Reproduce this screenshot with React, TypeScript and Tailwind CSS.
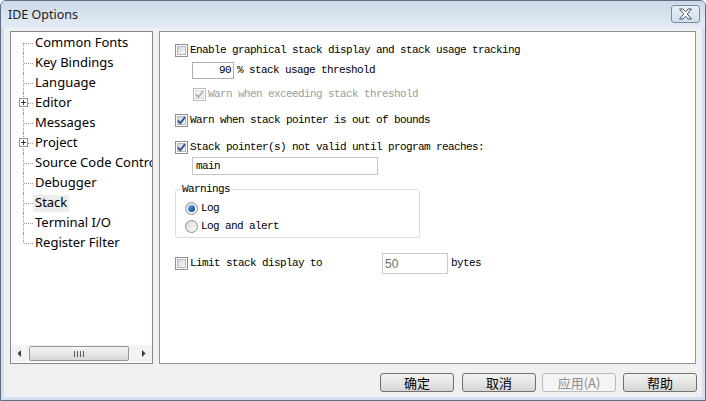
import React from 'react';

const treeItems = [
  { label: 'Common Fonts' },
  { label: 'Key Bindings' },
  { label: 'Language' },
  { label: 'Editor', plus: true },
  { label: 'Messages' },
  { label: 'Project', plus: true },
  { label: 'Source Code Control' },
  { label: 'Debugger' },
  { label: 'Stack', selected: true },
  { label: 'Terminal I/O' },
  { label: 'Register Filter' },
];

function CheckBox({ checked, disabled }: { checked?: boolean; disabled?: boolean }) {
  return (
    <span
      className={`w-[13px] h-[13px] shrink-0 border p-[1px] bg-white flex ${
        disabled ? 'border-[#bcbcbc]' : 'border-[#8e8f8f]'
      }`}
    >
      <span
        className={`relative flex-1 border flex items-center justify-center ${
          disabled
            ? 'border-[#dcdcdc] bg-[#f4f4f4]'
            : 'border-[#b4b9be] bg-gradient-to-br from-[#d4d7da] to-[#f7f7f7]'
        }`}
      >
        {checked && (
          <svg width="11" height="11" viewBox="0 0 11 11" className="absolute -top-[2px] -left-[2px]">
            <path
              d="M2 5.5 L4.4 8.2 L9 2.2"
              stroke={disabled ? '#b5b5b5' : '#35579a'}
              strokeWidth="1.9"
              fill="none"
            />
          </svg>
        )}
      </span>
    </span>
  );
}

function Radio({ checked }: { checked?: boolean }) {
  return (
    <span className="w-[13px] h-[13px] shrink-0 rounded-full border border-[#8e8f8f] bg-gradient-to-br from-[#dadada] to-[#fbfbfb] flex items-center justify-center">
      {checked && (
        <span className="w-[7px] h-[7px] rounded-full bg-gradient-to-br from-[#8fc3ec] via-[#2a72c0] to-[#123f7a]" />
      )}
    </span>
  );
}

function DlgButton({ label, disabled }: { label: string; disabled?: boolean }) {
  return (
    <button
      className={`w-[74px] h-[19px] rounded-[3px] border flex items-center justify-center text-[13px] leading-none ${
        disabled
          ? 'border-[#b8bcbf] bg-[#f4f4f4] text-[#8d8d8d]'
          : 'border-[#707070] bg-gradient-to-b from-[#f2f2f2] via-[#e6e6e6] to-[#d4d4d4] text-black'
      }`}
    >
      {label}
    </button>
  );
}

export default function App() {
  return (
    <div className="w-[706px] h-[401px] flex flex-col bg-[#d3dfee] border border-[#5d6d82] rounded-t-[6px] overflow-hidden font-['Noto_Sans',sans-serif]">
      {/* Title bar */}
      <div className="h-[27px] shrink-0 flex items-start justify-between pl-[7px] pr-[5px] pt-[4px] bg-gradient-to-b from-[#cddaea] to-[#e3ebf5]">
        <span className="text-[12.5px] leading-[18px] text-[#1b1b1b] pt-[1px]">IDE Options</span>
        <div className="w-[29px] h-[18px] rounded-[3px] border border-[#7d8ba0] bg-gradient-to-b from-[#e9eff7] to-[#d3deec] flex items-center justify-center">
          <svg width="15" height="12" viewBox="0 0 15 12">
            <path
              d="M1.5 1 L5 1 L7.5 3.8 L10 1 L13.5 1 L9.3 6 L13.5 11 L10 11 L7.5 8.2 L5 11 L1.5 11 L5.7 6 Z"
              fill="#f6f8fb"
              stroke="#4b5566"
              strokeWidth="1"
            />
          </svg>
        </div>
      </div>

      {/* Client area */}
      <div className="flex-1 mx-[3px] mb-[3px] bg-[#f0f0f0] flex flex-col pt-[3px]">
        <div className="flex pl-[6px]">
          {/* Tree */}
          <div className="w-[143px] h-[333px] border border-[#828790] bg-white flex flex-col overflow-hidden">
            <div className="flex-1 pt-[1px]">
              {treeItems.map((it, i) => (
                <div key={it.label} className="h-[20px] flex items-center">
                  <div className="relative w-[22px] h-full shrink-0">
                    <span
                      className={`absolute left-[12px] w-0 border-l border-dotted border-[#9a9a9a] ${
                        i === 0 ? 'top-1/2 bottom-0' : i === treeItems.length - 1 ? 'top-0 h-1/2' : 'top-0 bottom-0'
                      }`}
                    />
                    <span className="absolute left-[13px] top-1/2 w-[9px] h-0 border-t border-dotted border-[#9a9a9a]" />
                    {it.plus && (
                      <span className="absolute left-[8px] top-[5px] w-[9px] h-[9px] border border-[#929292] bg-white flex items-center justify-center">
                        <svg width="7" height="7" viewBox="0 0 7 7">
                          <path d="M1 3.5 H6 M3.5 1 V6" stroke="#2f3a4a" strokeWidth="1" />
                        </svg>
                      </span>
                    )}
                  </div>
                  <span
                    className={`px-[2px] h-[17px] flex items-center text-[13px] text-black whitespace-nowrap ${
                      it.selected ? 'bg-[#ececec]' : ''
                    }`}
                  >
                    {it.label}
                  </span>
                </div>
              ))}
            </div>
            {/* Horizontal scrollbar */}
            <div className="h-[17px] mb-[1px] flex bg-[#f3f3f3]">
              <div className="w-[17px] flex items-center justify-center">
                <svg width="5" height="7" viewBox="0 0 5 7">
                  <path d="M4 0 L0.5 3.5 L4 7 Z" fill="#3a3a3a" />
                </svg>
              </div>
              <div className="flex-1 flex items-center">
                <div className="ml-[1px] w-[100px] h-[15px] rounded-[2px] border border-[#979797] bg-gradient-to-b from-[#f4f4f4] via-[#e7e7e7] to-[#d6d6d6] flex items-center justify-center gap-[2px]">
                  <span className="w-px h-[6px] bg-[#5a5a5a]" />
                  <span className="w-px h-[6px] bg-[#5a5a5a]" />
                  <span className="w-px h-[6px] bg-[#5a5a5a]" />
                  <span className="w-px h-[6px] bg-[#5a5a5a]" />
                </div>
              </div>
              <div className="w-[17px] flex items-center justify-center">
                <svg width="5" height="7" viewBox="0 0 5 7">
                  <path d="M1 0 L4.5 3.5 L1 7 Z" fill="#3a3a3a" />
                </svg>
              </div>
            </div>
          </div>

          {/* Options page */}
          <div className="ml-[6px] w-[537px] h-[333px] border border-[#8e949c] bg-white pl-[15px] pt-[10px] flex flex-col font-['Liberation_Mono',monospace] text-[11px] tracking-[-0.6px] text-black">
            <div className="h-[16px] flex items-center gap-[2px]">
              <CheckBox />
              <span>Enable graphical stack display and stack usage tracking</span>
            </div>
            <div className="mt-[4px] h-[17px] flex items-center pl-[17px]">
              <div className="w-[42px] h-[17px] border border-[#abadb3] flex items-center justify-end pr-[2px]">90</div>
              <span className="ml-[3px]">% stack usage threshold</span>
            </div>
            <div className="mt-[7px] h-[16px] flex items-center gap-[2px] pl-[18px]">
              <CheckBox checked disabled />
              <span className="text-[#9c9c9c]">Warn when exceeding stack threshold</span>
            </div>
            <div className="mt-[10px] h-[16px] flex items-center gap-[2px]">
              <CheckBox checked />
              <span>Warn when stack pointer is out of bounds</span>
            </div>
            <div className="mt-[11px] h-[16px] flex items-center gap-[2px]">
              <CheckBox checked />
              <span>Stack pointer(s) not valid until program reaches:</span>
            </div>
            <div className="mt-[2px] pl-[17px]">
              <div className="w-[186px] h-[18px] border border-[#c5c7cc] flex items-center pl-[3px]">main</div>
            </div>

            <fieldset className="mt-[7px] w-[245px] border border-[#d5dfe5] rounded-[3px] pl-[9px] pr-0 pt-0 pb-[3px] m-0">
              <legend className="-ml-[4px] px-[1px] h-[14px] leading-[14px]">Warnings</legend>
              <div className="mt-[4px] h-[16px] flex items-center gap-[3px]">
                <Radio checked />
                <span>Log</span>
              </div>
              <div className="mt-[2px] h-[16px] flex items-center gap-[3px]">
                <Radio />
                <span>Log and alert</span>
              </div>
            </fieldset>

            <div className="mt-[15px] h-[21px] flex items-center">
              <div className="w-[207px] flex items-center gap-[2px]">
                <CheckBox />
                <span>Limit stack display to</span>
              </div>
              <div className="w-[66px] h-[21px] border border-[#c9cbcf] flex items-center pl-[2px] font-['Liberation_Sans',sans-serif] text-[12px] tracking-normal text-[#6f6f6f]">
                50
              </div>
              <span className="ml-[3px]">bytes</span>
            </div>
          </div>
        </div>

        {/* Buttons */}
        <div className="mt-[9px] flex justify-end pr-[5px] font-['Noto_Sans_CJK_SC',sans-serif]">
          <DlgButton label="确定" />
          <div className="ml-[8px]">
            <DlgButton label="取消" />
          </div>
          <div className="ml-[6px]">
            <DlgButton label="应用(A)" disabled />
          </div>
          <div className="ml-[7px]">
            <DlgButton label="帮助" />
          </div>
        </div>
      </div>
    </div>
  );
}
